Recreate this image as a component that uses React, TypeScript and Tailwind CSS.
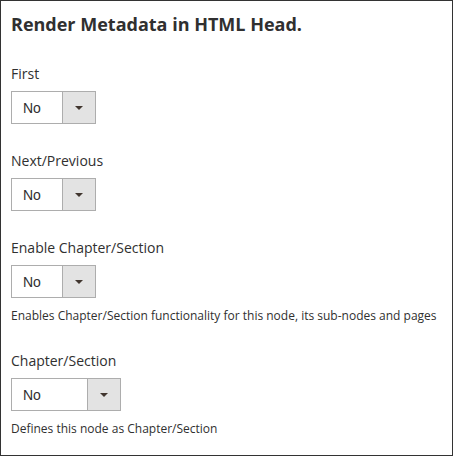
const fields = [
  { label: 'First', width: 'w-[85px]', note: '' },
  { label: 'Next/Previous', width: 'w-[85px]', note: '' },
  {
    label: 'Enable Chapter/Section',
    width: 'w-[85px]',
    note: 'Enables Chapter/Section functionality for this node, its sub-nodes and pages',
  },
  { label: 'Chapter/Section', width: 'w-[110px]', note: 'Defines this node as Chapter/Section' },
]

function Select({ width }: { width: string }) {
  return (
    <div className={`mt-[7px] flex h-[33px] border border-[#adadad] bg-white ${width}`}>
      <div className="flex flex-1 items-center pt-[1px] pl-[11px] font-['Liberation_Sans',Arial,sans-serif] text-[14px] text-[#303030]">
        No
      </div>
      <div className="flex w-[33px] items-center justify-center border-l border-[#adadad] bg-[#e3e3e3] pt-[1px]">
        <svg width="8" height="4" viewBox="0 0 8 4">
          <path d="M0 0h8L4 4z" fill="#41362f" />
        </svg>
      </div>
    </div>
  )
}

export default function App() {
  return (
    <div className="h-[456px] w-[453px] border border-[#333] bg-white pl-[10px] font-['Open_Sans',sans-serif] text-[#303030]">
      {/* Heading */}
      <h2 className="mt-[11px] text-[18px] leading-[24px] font-bold">Render Metadata in HTML Head.</h2>

      {fields.map((field) => (
        <div key={field.label} className="mt-[27px] first-of-type:mt-[28px]">
          <div className="text-[14px] leading-[20px]">{field.label}</div>
          <Select width={field.width} />
          {field.note && <div className="mt-[10px] text-[12px] leading-[16px]">{field.note}</div>}
        </div>
      ))}
    </div>
  )
}
